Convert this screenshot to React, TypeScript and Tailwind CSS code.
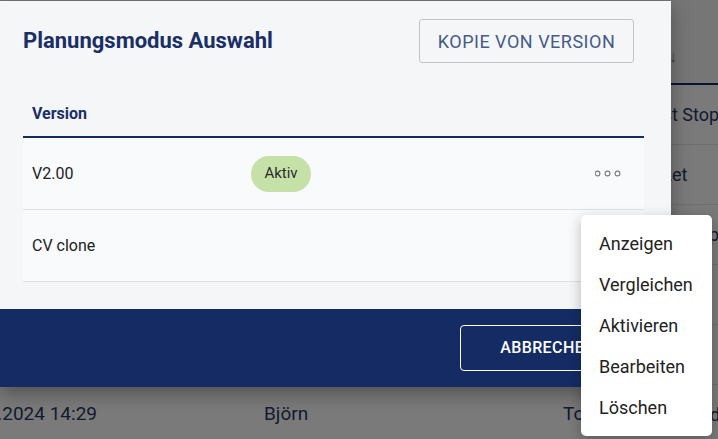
import React from "react";

type BgRow = { date: string; user: string; who: string; pre: string; preW: string; rest: string };

const bgRows: BgRow[] = [
  { date: "", user: "", who: "", pre: "Tes", preW: "w-[32px]", rest: "t Stop" },
  { date: "", user: "", who: "", pre: "Pak", preW: "w-[32px]", rest: "et" },
  { date: "", user: "", who: "", pre: "Tes", preW: "w-[32px]", rest: "t Stop" },
  { date: "", user: "", who: "", pre: "", preW: "w-[32px]", rest: "" },
  { date: "", user: "", who: "", pre: "", preW: "w-[32px]", rest: "" },
  { date: "14.05.2024 14:29", user: "Björn", who: "Tom", pre: "Test Mo", preW: "w-[70px]", rest: "dus" },
];

function Dots() {
  return (
    <svg width="26" height="7" viewBox="0 0 26 7" className="block">
      <circle cx="2.5" cy="3.5" r="2.4" fill="none" stroke="#7a7a7a" strokeWidth="1.1" />
      <circle cx="12.5" cy="3.5" r="2.4" fill="none" stroke="#7a7a7a" strokeWidth="1.1" />
      <circle cx="22.5" cy="3.5" r="2.4" fill="none" stroke="#7a7a7a" strokeWidth="1.1" />
    </svg>
  );
}

export default function App() {
  return (
    <div className="relative w-[718px] h-[439px] overflow-hidden bg-white font-['Roboto',sans-serif]">
      {/* background page */}
      <div className="flex flex-col w-[900px]">
        <div className="grid grid-cols-[97px_167px_299px_77px_260px] h-[85px] border-b-2 border-[#152b63] bg-[#f7f7f7]">
          <div />
          <div />
          <div />
          <div />
          <div className="flex items-end pb-[14px] pl-[29px] text-[16px] text-[#8a8f99]">↓</div>
        </div>
        {bgRows.map((r, i) => (
          <div
            key={i}
            className="grid grid-cols-[97px_167px_299px_77px_260px] h-[60px] items-center border-b border-[#e2e4e8] text-[19px] text-[#2a3a66] whitespace-nowrap"
          >
            <div className="flex justify-end">{r.date}</div>
            <div />
            <div>{r.user}</div>
            <div>{r.who}</div>
            <div className="text-[18px]">
              <span className={`inline-flex justify-end overflow-hidden ${r.preW}`}>{r.pre}</span>
              {r.rest}
            </div>
          </div>
        ))}
      </div>

      {/* overlay */}
      <div className="absolute inset-0 bg-black/[0.52]" />

      {/* modal */}
      <div className="absolute left-0 top-[1px] w-[671px] h-[386px] flex flex-col bg-[#f5f6f8] shadow-[0_6px_18px_rgba(0,0,0,0.35)]">
        <div className="flex items-center justify-between pl-[23px] pr-[37px] pt-[18px]">
          <h2 className="text-[22px] font-bold text-[#1a2f66] leading-none">Planungsmodus Auswahl</h2>
          <button className="h-[44px] w-[215px] rounded-[3px] border border-[#c2c4c8] text-[18px] text-[#465b89] tracking-[0.5px]">
            KOPIE VON VERSION
          </button>
        </div>

        <div className="mx-[23px] mt-[28px] w-[621px]">
          <div className="h-[47px] flex items-center px-[9px] border-b-2 border-[#152b63] text-[16px] font-bold text-[#1a2f66]">
            Version
          </div>
          <div className="h-[72px] grid grid-cols-[219px_1fr_auto] items-center pl-[9px] pr-[23px] bg-[#f9fafb] border-b border-[#dfe1e4] text-[16px] text-[#222]">
            <span>V2.00</span>
            <span>
              <span className="inline-flex h-[36px] w-[60px] items-center justify-center rounded-full bg-[#c6e1a8] text-[15px] text-[#2b2b2b]">
                Aktiv
              </span>
            </span>
            <Dots />
          </div>
          <div className="h-[72px] flex items-center pl-[9px] bg-[#f9fafb] border-b border-[#dfe1e4] text-[16px] text-[#222]">
            CV clone
          </div>
        </div>

        <div className="mt-auto h-[78px] bg-[#152b63] flex items-center justify-end pr-[35px]">
          <button className="h-[46px] w-[176px] rounded-[4px] border border-white text-white text-[16px] font-medium tracking-[0.4px]">
            ABBRECHEN
          </button>
        </div>
      </div>

      {/* dropdown menu */}
      <div className="absolute left-[581px] top-[215px] w-[131px] rounded-[5px] bg-white py-[8px] shadow-[0_4px_14px_rgba(0,0,0,0.25)]">
        {["Anzeigen", "Vergleichen", "Aktivieren", "Bearbeiten", "Löschen"].map((t) => (
          <div key={t} className="h-[41px] flex items-center px-[18px] text-[18px] text-[#222]">
            {t}
          </div>
        ))}
      </div>
    </div>
  );
}
